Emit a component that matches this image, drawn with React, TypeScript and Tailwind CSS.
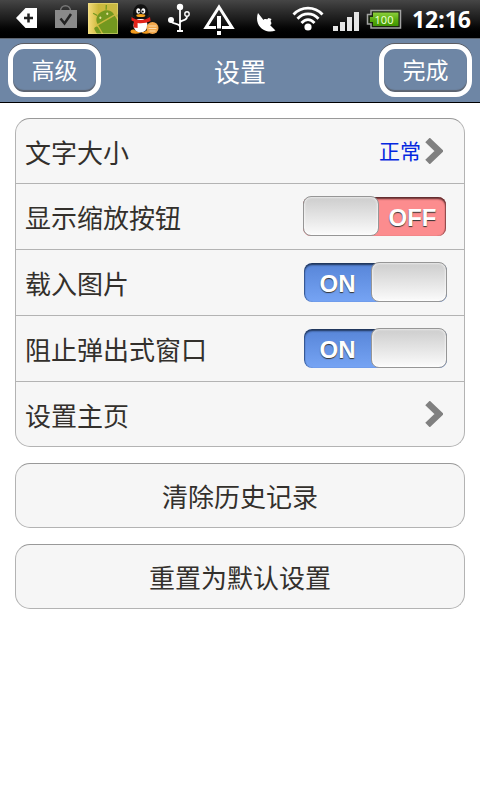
import React, { useState } from 'react';

type IconProps = { x: number; children: React.ReactNode };

// Status icons share one 38px slot size, x is the left edge of the slot in the bar
function StatusIcon({ x, children }: IconProps) {
  return (
    <svg className="size-[38px] shrink-0" viewBox={`${x} 0 38 38`} fill="none" aria-hidden="true">
      {children}
    </svg>
  );
}

function StatusBar() {
  return (
    <div className="flex h-[38px] items-center justify-between bg-linear-to-b from-[#464646] via-[#1c1c1c] via-50% to-black pl-2 pr-[9px]">
      <div className="flex">
        <StatusIcon x={8}>
          <path d="M16 18 25.500 8H37V28H25.500Z" fill="#fff" />
          <path d="M28.500 13.500v9M24 18h9" stroke="#222" strokeWidth="2.500" />
        </StatusIcon>
        <StatusIcon x={46}>
          <path d="M60.500 11c0-7 10-7 10 0" stroke="#777" strokeWidth="1.500" />
          <path d="M55 10H77V28H55Z" fill="#8a8a8a" />
          <path d="m60.500 18.500 4 5 6.500-9.500" stroke="#222" strokeWidth="2.500" />
        </StatusIcon>
        <StatusIcon x={84}>
          <defs>
            <linearGradient id="tile" x1="0" x2="1">
              <stop offset="0" stopColor="#f6dc7c" />
              <stop offset=".35" stopColor="#cdb93c" />
              <stop offset="1" stopColor="#c9b944" />
            </linearGradient>
            <clipPath id="tile-clip">
              <path d="M88 3h30v31H88z" />
            </clipPath>
          </defs>
          <path d="M88 3h30v31H88z" fill="url(#tile)" />
          <g clipPath="url(#tile-clip)">
            <g transform="rotate(-30 108 22)" fill="#73981f">
              <path d="M98 18.500c0-11.500 19-11.500 19 0z" />
              <path d="m102 11-2.500-4M112.500 10.500l2.500-4" stroke="#73981f" strokeWidth="1.300" />
              <path d="M98 20h19v20H98z" />
              <rect x="92.500" y="20" width="4.200" height="13" rx="2.100" />
              <rect x="118.500" y="20" width="4.200" height="13" rx="2.100" />
              <circle cx="103.500" cy="14.500" r="1.100" fill="#e6e29a" />
              <circle cx="111.500" cy="14.500" r="1.100" fill="#e6e29a" />
            </g>
          </g>
          <path d="M88.500 3.500h29v30h-29z" stroke="#eedf8c" strokeOpacity=".5" />
        </StatusIcon>
        <StatusIcon x={122}>
          <ellipse cx="135.500" cy="31.500" rx="5" ry="2.200" fill="#f39a1d" />
          <ellipse cx="146" cy="31.500" rx="4.500" ry="2.200" fill="#f39a1d" />
          <path d="M134 17c-4 4-5.500 9-4 11 1.500.6 3-2 4-4zM147 19c3 2 4 5 4 7l-3-2z" fill="#0c0c0c" />
          <ellipse cx="141" cy="24" rx="9" ry="8.500" fill="#111" />
          <ellipse cx="140.500" cy="25.500" rx="7" ry="7" fill="#fff" />
          <path d="M133 14c0-13 15.500-13 15.500 0 0 2-3 5-8 5s-7.500-3-7.500-5z" fill="#111" />
          <ellipse cx="138.300" cy="11" rx="2" ry="2.800" fill="#fff" />
          <ellipse cx="143.300" cy="11" rx="2" ry="2.800" fill="#fff" />
          <circle cx="138.900" cy="11.500" r="1" fill="#111" />
          <circle cx="142.800" cy="11.500" r="1" fill="#111" />
          <ellipse cx="140.800" cy="15.500" rx="4.500" ry="1.500" fill="#f5a21c" />
          <path d="M131.500 17c5 4 13 4 18.500 0l.6 4c-4 2-9 2.600-13 2v5l-4-.5.300-6-2.400-1z" fill="#e2231a" />
          <circle cx="152.500" cy="28" r="6" fill="#f3a84c" />
          <path d="M148.500 26h8M148.500 28.500h8M149.500 31h6" stroke="#fbdcae" strokeWidth="1" />
        </StatusIcon>
        <StatusIcon x={160}>
          <g stroke="#fff" strokeWidth="1.800">
            <path d="M180 7v23M170.500 20c0 5 9 2.500 9.500 7M187 16.500c0 5-6 3-7 6" />
            <circle cx="187" cy="14" r="2.200" strokeWidth="1.400" />
          </g>
          <circle cx="180" cy="7" r="3.200" fill="#fff" />
          <circle cx="171" cy="20" r="3" fill="#fff" />
          <path d="M177 30h6v2h-6z" fill="#fff" />
        </StatusIcon>
        <StatusIcon x={198}>
          <path d="M216 27.500H206L219 7l13 20.500h-10" stroke="#fff" strokeWidth="3" />
          <path d="M217 16h4v12.500h-4zM217 31h4v4h-4z" fill="#fff" />
        </StatusIcon>
      </div>
      <div className="flex items-center">
        <StatusIcon x={252}>
          <path d="M258 13c-2.500 7 0 14 6 17 4 2 8 2 11.500.500l-5.500-5.500c2 0 1.500-3 .5-4l1-2-3-1-1.500 1.500c-1.500-1-3.500 0-3.500.5z" fill="#fff" />
        </StatusIcon>
        <StatusIcon x={290}>
          <g stroke="#fff" strokeWidth="2.800">
            <path d="M293.500 14.500c8-8.500 21-8.500 29 0" />
            <path d="M297.500 18.800c6-6.500 15-6.500 21 0" />
            <path d="M301.500 23c4-4.500 9-4.500 13 0" />
          </g>
          <circle cx="308" cy="27" r="3.600" fill="#fff" />
        </StatusIcon>
        <StatusIcon x={328}>
          <path d="M333 26h5v5h-5zM340 22h5v9h-5zM347 17h5v14h-5zM354 12h5v19h-5z" fill="#e4e4e4" />
        </StatusIcon>
        <StatusIcon x={366}>
          <defs>
            <linearGradient id="charge" x1="0" x2="0" y1="0" y2="1">
              <stop offset="0" stopColor="#8ccf3c" />
              <stop offset=".5" stopColor="#5cae12" />
              <stop offset="1" stopColor="#3f9400" />
            </linearGradient>
          </defs>
          <path d="M371 10.500h29.500v17.500H371v-4h-3.500v-9.500h3.500z" fill="#1a2410" stroke="#a3a3a3" strokeWidth="1.500" />
          <path d="M373 12.500h25.500V26H373v-4h-3v-5h3z" fill="url(#charge)" />
          <text x="384" y="23.500" fill="#eaffd0" fontSize="11" textAnchor="middle" fontFamily="Noto Sans, sans-serif">100</text>
        </StatusIcon>
        <span className="ml-2 font-['Noto_Sans',sans-serif] text-[23px] leading-[38px] font-bold text-white">12:16</span>
      </div>
    </div>
  );
}

function HeaderButton({ children }: { children: React.ReactNode }) {
  return (
    <button
      type="button"
      className="h-[53px] w-[93px] rounded-[16px] border-[5px] border-white pb-[3px] text-[23px] leading-[40px] text-white shadow-[0_-1px_0_#5d5d62,inset_0_-2px_1px_#5d6470]"
    >
      {children}
    </button>
  );
}

function Chevron() {
  return (
    <svg className="h-[26px] w-[18px]" viewBox="0 0 18 26" fill="none" aria-hidden="true">
      <path d="m2.500 2 11.500 11L2.500 24" stroke="#808080" strokeWidth="6.500" />
    </svg>
  );
}

function Toggle({ id, initial }: { id: string; initial: boolean }) {
  const [on, setOn] = useState(initial);
  return (
    <label className={`grid h-[41px] w-[143px] cursor-pointer ${on ? '' : 'mr-px'}`}>
      <input
        id={id}
        type="checkbox"
        checked={on}
        onChange={() => setOn(!on)}
        className="col-start-1 row-start-1 mt-px h-[39px] w-full appearance-none rounded-lg bg-[#fc8c8e] shadow-[inset_0_2px_2px_#5c2a2c,inset_-1px_0_1px_#a05254] checked:bg-linear-to-b checked:from-[#5785d8] checked:to-[#76a4f4] checked:shadow-[inset_0_2px_2px_#1f3458,inset_1px_0_1px_#3c62a4]"
      />
      <span className={`pointer-events-none col-start-1 row-start-1 flex ${on ? '' : 'flex-row-reverse'}`}>
        <span className="flex-1 text-center font-['Liberation_Sans',sans-serif] text-2xl leading-[43px] font-bold text-white text-shadow-[0_1px_1px_#333]">
          {on ? 'ON' : 'OFF'}
        </span>
        <span className="h-10 w-[76px] rounded-lg border border-[#969696] bg-linear-to-b from-[#cdcdcd] to-[#fbfbfb] shadow-[inset_0_0_2px_1px_#ffffff90]" />
      </span>
    </label>
  );
}

const rowClass = 'flex h-[66px] w-full items-center justify-between border-b border-[#b3b3b3] pl-[9px] pr-[17px]';

function ToggleRow({ id, label, on }: { id: string; label: string; on: boolean }) {
  return (
    <div className={rowClass}>
      <label htmlFor={id}>{label}</label>
      <Toggle id={id} initial={on} />
    </div>
  );
}

function ActionButton({ children }: { children: React.ReactNode }) {
  return (
    <button type="button" className="mt-4 h-[65px] w-full rounded-[15px] border border-[#b3b3b3] border-t-[#999] bg-[#f6f6f6] text-center">
      {children}
    </button>
  );
}

export default function App() {
  return (
    <div className="min-h-screen bg-white font-['Noto_Sans_CJK_SC',sans-serif] text-[26px] text-[#33302c]">
      <StatusBar />
      <header className="flex h-[65px] items-center justify-between border-t border-b border-t-[#5e6570] border-b-black bg-[#6e86a5] px-2 text-white">
        <HeaderButton>高级</HeaderButton>
        <h1>设置</h1>
        <HeaderButton>完成</HeaderButton>
      </header>
      <main className="px-[15px] pt-[15px]">
        <div className="rounded-[15px] border border-[#b3b3b3] border-t-[#999] bg-[#f6f6f6]">
          <button type="button" className="flex h-[65px] w-full items-center justify-between border-b border-[#b3b3b3] pl-[9px] pr-[21px]">
            <span>文字大小</span>
            <span className="flex items-center gap-1 text-[21px] text-[#0528e0]">
              正常
              <Chevron />
            </span>
          </button>
          <ToggleRow id="zoom-buttons" label="显示缩放按钮" on={false} />
          <ToggleRow id="load-images" label="载入图片" on />
          <ToggleRow id="block-popups" label="阻止弹出式窗口" on />
          <button type="button" className="flex h-16 w-full items-center justify-between pl-[9px] pr-[21px]">
            <span>设置主页</span>
            <Chevron />
          </button>
        </div>
        <ActionButton>清除历史记录</ActionButton>
        <ActionButton>重置为默认设置</ActionButton>
      </main>
    </div>
  );
}
